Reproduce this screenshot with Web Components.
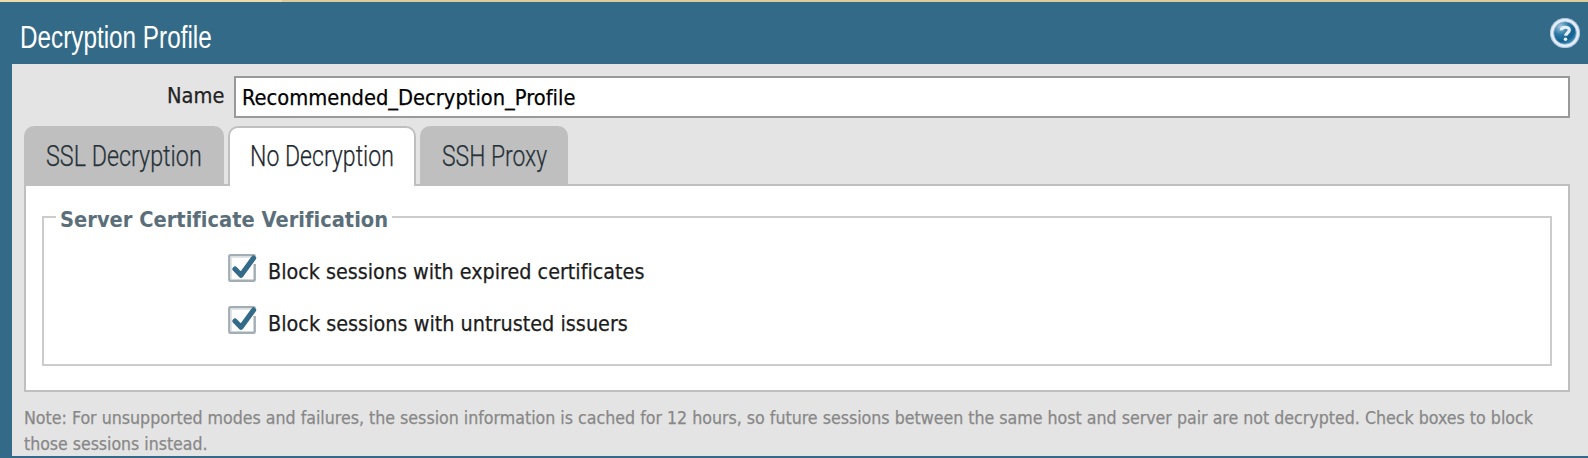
<!DOCTYPE html>
<html lang="en">
<head>
<meta charset="utf-8">
<title>Decryption Profile</title>
<style>
html,body{margin:0;height:100%;overflow:hidden}
body{font-family:"DejaVu Sans Condensed","DejaVu Sans",sans-serif;font-stretch:condensed;font-size:22px;color:#222;font-variant-ligatures:none}
</style>
</head>
<body>
<profile-dialog></profile-dialog>
<script>
const define = (name, html, setup) => {
  const tpl = document.createElement('template');
  tpl.innerHTML = html;
  customElements.define(name, class extends HTMLElement {
    connectedCallback() {
      if (this.shadowRoot) return;
      this.attachShadow({mode: 'open'}).appendChild(tpl.content.cloneNode(true));
      if (setup) setup(this, this.shadowRoot);
    }
  });
};

// A single line of text scaled horizontally to the width given in the attribute.
define('fit-text', `<style>
:host{display:block;white-space:nowrap;flex:none}
span{display:inline-block;transform-origin:0 50%}
</style><span><slot></slot></span>`, (el, root) => {
  const w = +el.getAttribute('width');
  const s = root.querySelector('span');
  s.style.transform = 'scaleX(' + w / s.offsetWidth + ')';
  el.style.width = w + 'px';
});

define('help-icon', `<style>:host{display:block;width:30px;height:30px}svg{display:block}</style>
<svg width="30" height="30" viewBox="0 0 30 30">
<defs><radialGradient id="g" cx=".3" cy=".22" r=".9"><stop offset="0" stop-color="#a3c8de"/><stop offset=".4" stop-color="#2c78a4"/><stop offset=".7" stop-color="#13608f"/><stop offset="1" stop-color="#4a9cc0"/></radialGradient></defs>
<circle cx="15" cy="15" r="15.2" fill="#a9c6df"/><circle cx="15" cy="15" r="14" fill="#e6edf8"/>
<circle cx="15" cy="15" r="11.3" fill="url(#g)" stroke="#9dbdd6" stroke-width=".8"/>
<path d="M11.3 12.3C11.3 8.4 19.3 8.2 19.3 12C19.3 14.6 15.8 14.8 15.8 17.7" fill="none" stroke="#e6eff6" stroke-width="3.2"/>
<circle cx="15.5" cy="21.3" r="1.8" fill="#e6eff6"/></svg>`);

define('dialog-header', `<style>
:host{display:flex;height:62px;box-sizing:border-box;padding:0 8px 0 20px;justify-content:space-between;color:#fff;font:31px/71px "Liberation Sans",sans-serif}
help-icon{margin-top:16px}
</style><fit-text width="192"><slot></slot></fit-text><help-icon></help-icon>`);

define('name-field', `<style>
:host{display:flex;height:42px;-webkit-text-stroke:.25px}
.label{width:210px;display:flex;justify-content:flex-end;line-height:40px}
.label fit-text{margin-right:10px}
.box{flex:1;border:2px solid #999;background:#fff;color:#000;padding-left:6px;line-height:39px}
</style><div class="label"><fit-text width="57">Name</fit-text></div><div class="box"><fit-text width="333"><slot></slot></fit-text></div>`);

define('tab-button', `<style>
:host{display:block;box-sizing:border-box;height:58px;border:2px solid #bfbfbf;border-bottom:0;border-radius:10px 10px 0 0;background:#bfbfbf;padding-left:20px;font:300 29px/56px Roboto,sans-serif;color:#263238;-webkit-text-stroke:.25px}
:host([active]){background:#fff;height:60px;margin-bottom:-2px;color:#1c2730}
</style><slot></slot>`);

define('tab-bar', `<style>
:host{display:flex;gap:4px;height:58px;position:relative}
</style><slot></slot>`);

define('check-item', `<style>
:host{display:flex;height:28px;line-height:36px;color:#1c1c1c;-webkit-text-stroke:.25px}
svg{flex:none;margin-right:12px;overflow:visible}
</style><svg width="28" height="28" viewBox="0 0 28 28">
<rect x="1.3" y="1.3" width="25.4" height="25.4" rx="1" fill="#fff" stroke="#a2adb4" stroke-width="2.4"/>
<path d="M3.3 25V3.3H25" fill="none" stroke="#e2e5e7" stroke-width="1.5"/>
<path d="M23 2H28V10H23Z" fill="#fff"/>
<path d="M7 15L13 21.2L25.6 4" fill="none" stroke="#336b89" stroke-width="5.2" stroke-linecap="round" stroke-linejoin="round"/></svg><slot></slot>`);

define('field-group', `<style>
:host{display:block;position:relative;box-sizing:border-box;height:150px;border:2px solid #ccc;padding:36px 0 0 184px}
.legend{position:absolute;left:12px;top:-14px;padding:0 4px;background:#fff;color:#5b6f7b;font-weight:bold;line-height:32px}
.items{display:grid;gap:24px}
</style><div class="legend"><fit-text width="328"><slot name="legend"></slot></fit-text></div><div class="items"><slot></slot></div>`);

define('tab-panel', `<style>
:host{display:block;box-sizing:border-box;height:208px;border:2px solid #bfbfbf;background:#fff;padding:30px 16px 0}
</style><slot></slot>`);

define('dialog-note', `<style>
:host{display:block;margin-top:13px;font-size:18px;line-height:26px;color:#888;-webkit-text-stroke:.25px}
</style><slot></slot>`);

define('profile-dialog', `<style>
:host{display:flex;flex-direction:column;box-sizing:border-box;height:458px;background:#336a88;border-bottom:2px solid #336a88}
.strip{height:2px;background:linear-gradient(90deg,#eddba9 282px,#dccb9c 282px)}
main{flex:1;min-height:0;margin-left:12px;padding:12px 18px 0 12px;background:#e4e4e4}
tab-bar{margin-top:8px}
</style>
<div class="strip"></div>
<dialog-header>Decryption Profile</dialog-header>
<main>
<name-field>Recommended_Decryption_Profile</name-field>
<tab-bar>
<tab-button style="width:200px"><fit-text width="156">SSL Decryption</fit-text></tab-button>
<tab-button active style="width:188px"><fit-text width="144">No Decryption</fit-text></tab-button>
<tab-button style="width:148px"><fit-text width="105">SSH Proxy</fit-text></tab-button>
</tab-bar>
<tab-panel><field-group><span slot="legend">Server Certificate Verification</span>
<check-item><fit-text width="376">Block sessions with expired certificates</fit-text></check-item>
<check-item><fit-text width="360">Block sessions with untrusted issuers</fit-text></check-item>
</field-group></tab-panel>
<dialog-note><fit-text width="1509">Note: For unsupported modes and failures, the session information is cached for 12 hours, so future sessions between the same host and server pair are not decrypted. Check boxes to block</fit-text><fit-text width="183">those sessions instead.</fit-text></dialog-note>
</main>`);
</script>
</body>
</html>
